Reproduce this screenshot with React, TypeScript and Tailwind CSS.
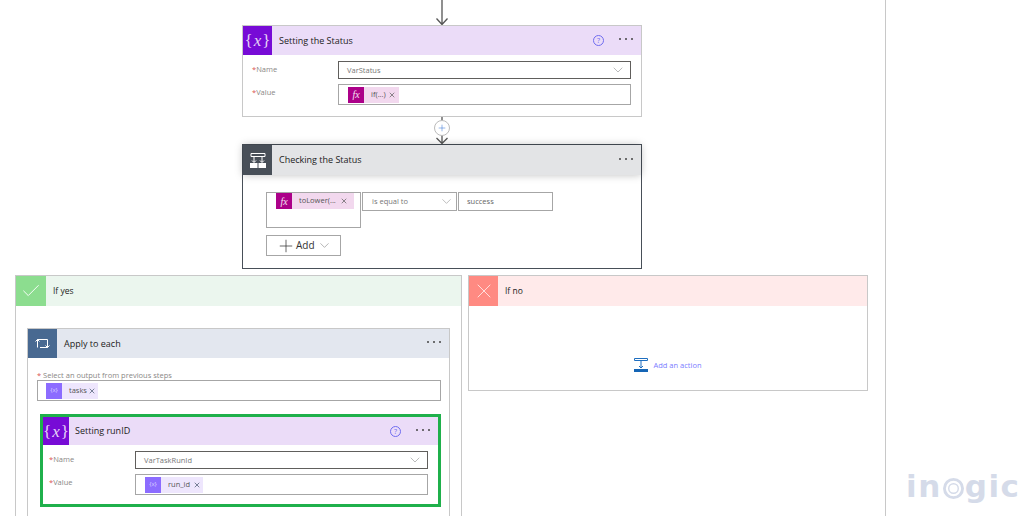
import type { ReactNode } from 'react';
import { Check, ChevronDown, Plus, X } from 'lucide-react';

const FONT = 'font-["Open_Sans","Noto_Sans",sans-serif]';

function VariableIcon({ width }: { width: string }) {
  return (
    <div className={`${width} flex shrink-0 items-center justify-center bg-[#770bd6] font-["Liberation_Serif",serif] text-[17px] leading-none text-[#e6d4f7]`}>
      <span>{'{'}</span>
      <span className="mx-[1px] italic">x</span>
      <span>{'}'}</span>
    </div>
  );
}

function Dots() {
  return (
    <div className="mb-[3px] flex items-center gap-[4px]">
      <span className="h-[2px] w-[2px] rounded-full bg-[#444]" />
      <span className="h-[2px] w-[2px] rounded-full bg-[#444]" />
      <span className="h-[2px] w-[2px] rounded-full bg-[#444]" />
    </div>
  );
}

function HelpIcon() {
  return (
    <div className="flex h-[11px] w-[11px] items-center justify-center rounded-full border border-[#6f6cf0] text-[7px] leading-none text-[#6f6cf0]">?</div>
  );
}

function FxToken({ label, width, closeMargin }: { label: string; width: string; closeMargin: string }) {
  return (
    <div className={`${width} flex h-4 shrink-0 items-center bg-[#f2d8ee] text-[7.5px] text-[#555]`}>
      <div className="flex h-4 w-4 shrink-0 items-center justify-center bg-[#ac0089] font-['Liberation_Serif',serif] text-[10px] italic text-[#f6e3f2]">fx</div>
      <span className="ml-[7px] flex-1 whitespace-nowrap">{label}</span>
      <X size={8} strokeWidth={2} className={`${closeMargin} shrink-0 text-[#555]`} />
    </div>
  );
}

function VarToken({ label, width }: { label: string; width: string }) {
  return (
    <div className={`${width} flex h-4 shrink-0 items-center bg-[#eee6fd] text-[7.5px] text-[#555]`}>
      <div className="flex h-4 w-4 shrink-0 items-center justify-center bg-[#8c6cff] text-[6px] text-[#ddd2ff]">{'{x}'}</div>
      <span className="ml-[7px] flex-1 whitespace-nowrap">{label}</span>
      <X size={8} strokeWidth={2.2} className="mr-[2px] shrink-0 text-[#4a5a70]" />
    </div>
  );
}

function FieldLabel({ children, width }: { children: ReactNode; width: string }) {
  return (
    <div className={`${width} mt-[5px] text-[7.5px] leading-none text-[#8a8886]`}>
      <span className="text-[#d9534f]">*</span>
      {children}
    </div>
  );
}

function VariableFields({ name, token }: { name: string; token: ReactNode }) {
  return (
    <div className="mt-[6px] flex flex-col gap-[5px]">
      <div className="flex items-start">
        <FieldLabel width="w-[86px]">Name</FieldLabel>
        <div className="flex h-[18px] w-[293px] items-center justify-between border border-[#605e5c] pr-[4px] pl-[8px] text-[7.5px] text-[#777]">
          <span className="pt-[2px]">{name}</span>
          <ChevronDown size={16} strokeWidth={1} className="text-[#999]" />
        </div>
      </div>
      <div className="flex items-start">
        <FieldLabel width="w-[86px]">Value</FieldLabel>
        <div className="flex h-[21px] w-[293px] items-center border border-[#a6a6a6] pl-[9px]">{token}</div>
      </div>
    </div>
  );
}

function Flow() {
  return (
    <svg width="14" height="26" viewBox="0 0 14 26" className="shrink-0 text-[#555]" fill="none" stroke="currentColor" strokeWidth="1.3">
      <path d="M7 0V24M1.5 18.5L7 24.5L12.5 18.5" />
    </svg>
  );
}

function Connector() {
  return (
    <div className="relative flex h-[27px] w-[16px] shrink-0 justify-center">
      <svg width="14" height="27" viewBox="0 0 14 27" fill="none" stroke="#555" strokeWidth="1.3">
        <path d="M7 0V26M1.5 21L7 26.5L12.5 21" />
      </svg>
      <div className="absolute top-[3px] left-0 flex h-[16px] w-[16px] items-center justify-center rounded-full border border-[#bbb] bg-white">
        <Plus size={10} strokeWidth={1.2} className="text-[#2f6fd0]" />
      </div>
    </div>
  );
}

function ConditionIcon() {
  return (
    <svg width="16" height="15" viewBox="0 0 16 15" fill="none" stroke="#fff" strokeWidth="1">
      <path d="M1 .5H15V3.5H1ZM4 3.5V9M12 3.5V9M2 7.5L4 9.5L6 7.5M10 7.5L12 9.5L14 7.5" />
      <rect x="0.5" y="10.5" width="6.5" height="4" fill="#fff" />
      <rect x="9" y="10.5" width="6.5" height="4" fill="#fff" />
    </svg>
  );
}

function LoopIcon() {
  return (
    <svg width="15" height="11" viewBox="0 0 15 11" fill="none" stroke="#fff" strokeWidth="1">
      <path d="M2.5 9.5V1.5H12.5V9.5H5M.5 3.5L2.5 1.5L4.5 3.5M10.5 7.5L12.5 9.5L14.5 7.5" />
    </svg>
  );
}

function AddActionIcon() {
  return (
    <svg width="14" height="14" viewBox="0 0 14 14" fill="none" stroke="#1f6fc0" strokeWidth="1">
      <path d="M.5 .5H13.5V2.5H.5ZM7 2.5V10M5 8L7 10L9 8" />
      <rect x="0" y="11" width="14" height="3" fill="#1565b5" stroke="none" />
    </svg>
  );
}

export default function App() {
  return (
    <div className={`${FONT} flex h-[516px] w-[1030px] overflow-hidden bg-white text-[#222]`}>
      <div className="flex w-[886px] shrink-0 flex-col items-center border-r border-[#c8c8c8]">
        <div className="flex h-[25px] w-full shrink-0 justify-center pr-[1px]">
          <Flow />
        </div>

        <div className="mr-[1px] flex h-[92px] w-[400px] shrink-0 flex-col border border-[#c8c8c8]">
          <div className="flex h-[29px] shrink-0 bg-[#ebdcf8]">
            <VariableIcon width="w-[29px]" />
            <div className="mt-[1px] ml-[7px] flex-1 self-center text-[9px] text-[#222]">Setting the Status</div>
            <div className="mr-[8px] flex items-center gap-[15px]">
              <HelpIcon />
              <Dots />
            </div>
          </div>
          <div className="pl-[9px]">
            <VariableFields name="VarStatus" token={<FxToken label="if(...)" width="w-[51px]" closeMargin="mr-[3px]" />} />
          </div>
        </div>

        <div className="mr-[1px] flex justify-center">
          <Connector />
        </div>

        <div className="relative mr-[1px] flex h-[125px] w-[400px] shrink-0 flex-col border border-[#484f58] bg-white">
          <div className="flex h-[30px] shrink-0 bg-[#e3e4e6] shadow-[0_0_8px_rgba(0,0,0,0.25)]">
            <div className="flex w-[29px] shrink-0 items-center justify-center bg-[#484f58]">
              <ConditionIcon />
            </div>
            <div className="ml-[7px] flex-1 self-center text-[9px] text-[#222]">Checking the Status</div>
            <div className="mr-[8px] flex items-center">
              <Dots />
            </div>
          </div>
          <div className="mt-[17px] flex items-start gap-[1px] pl-[23px]">
            <div className="h-[36px] w-[95px] border border-[#a6a6a6] pl-[9px]">
              <FxToken label="toLower(..." width="w-[78px]" closeMargin="mr-[6px]" />
            </div>
            <div className="flex h-[19px] w-[95px] items-center justify-between border border-[#a6a6a6] pr-[2px] pl-[9px] text-[7.5px] text-[#777]">
              <span className="pt-[1px]">is equal to</span>
              <ChevronDown size={15} strokeWidth={1} className="text-[#999]" />
            </div>
            <div className="flex h-[19px] w-[95px] items-center border border-[#a6a6a6] pl-[8px] text-[7.5px] text-[#666]">success</div>
          </div>
          <div className="mt-[7px] ml-[23px] flex h-[21px] w-[75px] items-center border border-[#a6a6a6] pl-[9px] text-[10px] text-[#333]">
            <Plus size={20} strokeWidth={0.9} />
            <span>Add</span>
            <ChevronDown size={15} strokeWidth={1} className="ml-[2px] text-[#888]" />
          </div>
        </div>

        <div className="mt-[6px] flex w-full items-start gap-[6px] pl-[15px]">
          <div className="h-[300px] w-[447px] shrink-0 border border-[#c8c8c8]">
            <div className="flex h-[30px] bg-[#ebf6ee]">
              <div className="flex w-[30px] items-center justify-center bg-[#8cdd8f]">
                <Check size={22} strokeWidth={1} className="text-white" />
              </div>
              <div className="ml-[7px] self-center text-[8.5px]">If yes</div>
            </div>

            <div className="mt-[22px] ml-[11px] h-[300px] w-[423px] border border-[#c8c8c8]">
              <div className="flex h-[29px] bg-[#e3e7ef]">
                <div className="flex w-[29px] items-center justify-center bg-[#486991]">
                  <LoopIcon />
                </div>
                <div className="mt-[1px] ml-[7px] flex-1 self-center text-[9px]">Apply to each</div>
                <div className="mr-[8px] flex items-center">
                  <Dots />
                </div>
              </div>
              <div className="mt-[13px] ml-[9px] h-[9px] text-[7.5px] leading-[9px] text-[#8a8886]">
                <span className="text-[#d9534f]">* </span>Select an output from previous steps
              </div>
              <div className="ml-[9px] flex h-[21px] w-[404px] items-center border border-[#a6a6a6] pl-[8px]">
                <VarToken label="tasks" width="w-[52px]" />
              </div>

              <div className="mt-[13px] ml-[12px] flex h-[93px] w-[401px] flex-col border-[3px] border-[#1fb04b]">
                <div className="flex h-[28px] shrink-0 bg-[#ebdcf8]">
                  <VariableIcon width="w-[26px]" />
                  <div className="ml-[6px] flex-1 self-center text-[9px]">Setting runID</div>
                  <div className="mr-[8px] flex items-center gap-[15px]">
                    <HelpIcon />
                    <Dots />
                  </div>
                </div>
                <div className="pl-[6px]">
                  <VariableFields name="VarTaskRunId" token={<VarToken label="run_id" width="w-[58px]" />} />
                </div>
              </div>
            </div>
          </div>

          <div className="flex h-[116px] w-[400px] shrink-0 flex-col border border-[#c8c8c8]">
            <div className="flex h-[30px] shrink-0 bg-[#ffeaea]">
              <div className="flex w-[29px] items-center justify-center bg-[#ff8a82]">
                <X size={24} strokeWidth={0.9} className="text-[#ffe9e7]" />
              </div>
              <div className="ml-[7px] self-center text-[8.5px]">If no</div>
            </div>
            <div className="flex flex-1 items-end justify-center pb-[18px]">
              <div className="flex items-center gap-[5px]">
                <AddActionIcon />
                <span className="pt-[2px] text-[7.5px] text-[#7a7cff]">Add an action</span>
              </div>
            </div>
          </div>
        </div>
      </div>

      <div className="relative flex-1">
        <div className="absolute top-[464px] left-[20px] flex items-center font-['DejaVu_Sans',sans-serif] text-[31px] leading-[44px] font-bold tracking-[1.5px] text-[#d5dbe9]">
          <span>in</span>
          <svg width="21" height="21" viewBox="0 0 22 22" fill="none" stroke="#d5dbe9" className="mx-[1px] mt-[4px]">
            <circle cx="11" cy="11" r="9.5" strokeWidth="3" />
            <circle cx="11" cy="11" r="5" strokeWidth="1.5" />
          </svg>
          <span>gic</span>
        </div>
      </div>
    </div>
  );
}
